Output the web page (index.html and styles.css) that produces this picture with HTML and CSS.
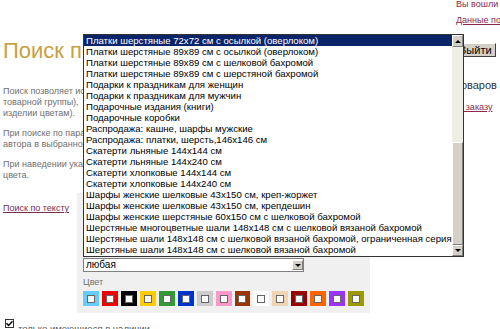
FILE: index.html
```html
<!DOCTYPE html>
<html lang="ru">
<head>
    <meta charset="UTF-8">
    <title>Поиск по каталогу</title>
    <link rel="stylesheet" href="styles.css">
</head>
<body>
    <div class="page">
        <!-- левая колонка -->
        <div class="main">
            <h1 class="title">Поиск по каталогу</h1>
            <div class="intro">
                <p class="note">Поиск позволяет искать изделия по названию (внутри<br>товарной группы),<br>изделии цветам).</p>
                <p class="note">При поиске по параметрам учитывается название и имя<br>автора в выбранной товарной группе.</p>
                <p class="note">При наведении указателя на квадрат показывается название<br>цвета.</p>
            </div>
            <div class="search">
                <div class="search-side">
                    <a href="#" class="text-link">Поиск по тексту</a>
                </div>
                <div class="panel">
                    <div class="panel-caption">Параметры поиска</div>
                    <div class="field">
                        <div class="field-label">Название</div>
                        <div class="select"><span class="select-value"></span></div>
                    </div>
                    <div class="field-label">Товарная группа</div>
                    <div class="select select-group">
                        <span class="select-value">любая</span>
                        <span class="arrow-btn"><span class="tri-down"></span></span>
                    </div>
                    <div class="field-label color-label">Цвет</div>
                    <div class="swatches">
                        <span class="swatch" style="background:#66ccff"><i></i></span>
                        <span class="swatch" style="background:#ee0000"><i></i></span>
                        <span class="swatch" style="background:#000000"><i></i></span>
                        <span class="swatch" style="background:#ffcc00"><i></i></span>
                        <span class="swatch" style="background:#339933"><i></i></span>
                        <span class="swatch" style="background:#0033cc"><i></i></span>
                        <span class="swatch" style="background:#cccccc"><i></i></span>
                        <span class="swatch" style="background:#ff99cc"><i></i></span>
                        <span class="swatch" style="background:#993300"><i></i></span>
                        <span class="swatch" style="background:#ffffff"><i></i></span>
                        <span class="swatch" style="background:#f0d5b5"><i></i></span>
                        <span class="swatch" style="background:#990000"><i></i></span>
                        <span class="swatch" style="background:#ff6600"><i></i></span>
                        <span class="swatch" style="background:#9933ff"><i></i></span>
                        <span class="swatch" style="background:#999900"><i></i></span>
                    </div>
                </div>
            </div>
            <label class="stock">
                <span class="check">
                    <svg width="7" height="7" viewBox="0 0 7 7"><path d="M0.5 3.2 L2.6 5.4 L6.5 1.2" fill="none" stroke="#000" stroke-width="1.5"/></svg>
                </span>
                <span class="stock-text">только имеющиеся в наличии</span>
            </label>
        </div>

        <!-- правая колонка -->
        <div class="sidebar">
            <div class="user">Вы вошли как Гость</div>
            <a href="#" class="side-link profile-link">Данные пользователя</a>
            <button class="logout">Выйти</button>
            <div class="cart">товаров в корзине нет</div>
            <a href="#" class="side-link order-link">К заказу</a>
        </div>
    </div>

    <!-- раскрытый список товарных групп -->
    <div class="dropdown">
        <ul class="options">
            <li class="selected">Платки шерстяные 72x72 см с осылкой (оверлоком)</li>
            <li>Платки шерстяные 89x89 см с осылкой (оверлоком)</li>
            <li>Платки шерстяные 89x89 см с шелковой бахромой</li>
            <li>Платки шерстяные 89x89 см с шерстяной бахромой</li>
            <li>Подарки к праздникам для женщин</li>
            <li>Подарки к праздникам для мужчин</li>
            <li>Подарочные издания (книги)</li>
            <li>Подарочные коробки</li>
            <li>Распродажа: кашне, шарфы мужские</li>
            <li>Распродажа: платки, шерсть,146x146 см</li>
            <li>Скатерти льняные 144x144 см</li>
            <li>Скатерти льняные 144x240 см</li>
            <li>Скатерти хлопковые 144x144 см</li>
            <li>Скатерти хлопковые 144x240 см</li>
            <li>Шарфы женские шелковые 43x150 см, креп-жоржет</li>
            <li>Шарфы женские шелковые 43x150 см, крепдешин</li>
            <li>Шарфы женские шерстяные 60x150 см с шелковой бахромой</li>
            <li>Шерстяные многоцветные шали 148x148 см с шелковой вязаной бахромой</li>
            <li>Шерстяные шали 148x148 см с шелковой вязаной бахромой, ограниченная серия</li>
            <li>Шерстяные шали 148x148 см с шелковой вязаной бахромой</li>
        </ul>
        <div class="scrollbar">
            <span class="scroll-btn"><span class="tri-up"></span></span>
            <span class="track"></span>
            <span class="thumb"></span>
            <span class="scroll-btn scroll-btn-down"><span class="tri-down"></span></span>
        </div>
    </div>
</body>
</html>
```

FILE: styles.css
```css
html,
body {
    margin: 0;
    overflow: hidden;
}

body {
    font-family: "Liberation Sans", Arial, sans-serif;
    font-size: 9px;
    color: #707070;
    background: #fff;
}

.page {
    display: flex;
    width: 700px;
}

.main {
    width: 453px;
    flex-shrink: 0;
    padding-left: 3px;
    box-sizing: border-box;
}

.title {
    margin: 38px 0 22px;
    font-size: 22px;
    line-height: 26px;
    font-weight: normal;
    color: #c9a040;
    white-space: nowrap;
}

.intro {
    display: flex;
    flex-direction: column;
    gap: 9px;
    margin-bottom: 12px;
}

.note {
    margin: 0;
    line-height: 11px;
    white-space: nowrap;
}

.search {
    display: flex;
}

.search-side {
    width: 74px;
    padding-top: 10px;
    line-height: 11px;
}

.text-link {
    color: #7a2e4e;
}

.panel {
    width: 293px;
    padding: 4px 6px 7px;
    box-sizing: border-box;
    background: #f0f0f0;
}

.panel-caption {
    line-height: 11px;
    margin-bottom: 3px;
}

.field {
    margin-bottom: 6px;
}

.field-label {
    line-height: 11px;
    margin-bottom: 2px;
}

.color-label {
    margin-top: 5px;
    margin-bottom: 3px;
}

.select {
    position: relative;
    width: 221px;
    height: 15px;
    box-sizing: border-box;
    border: 1px solid #808080;
    background: #fff;
    font-size: 10px;
    line-height: 13px;
    color: #000;
    padding-left: 2px;
}

.select-group {
    height: 14px;
    line-height: 12px;
}

.arrow-btn {
    position: absolute;
    right: 0;
    top: 1px;
    width: 11px;
    height: 10px;
    box-sizing: border-box;
    background: #d4d0c8;
    border: 1px solid;
    border-color: #fff #808080 #808080 #fff;
    display: flex;
    align-items: center;
    justify-content: center;
}

.tri-down,
.tri-up {
    width: 0;
    height: 0;
    border-left: 3px solid transparent;
    border-right: 3px solid transparent;
}

.tri-down {
    border-top: 3px solid #000;
}

.tri-up {
    border-bottom: 3px solid #000;
}

.swatches {
    display: flex;
    gap: 3px;
}

.swatch {
    width: 16px;
    height: 15px;
    display: flex;
    align-items: center;
    justify-content: center;
}

.swatch i {
    width: 8px;
    height: 8px;
    box-sizing: border-box;
    background: #fff;
    border: 1px solid #666;
}

.stock {
    display: flex;
    align-items: flex-start;
    gap: 4px;
    margin: 6px 0 0 2px;
    color: #555;
}

.stock-text {
    font-size: 9.5px;
    line-height: 11px;
    padding-top: 4px;
}

.check {
    width: 9px;
    height: 9px;
    box-sizing: border-box;
    border: 1px solid #333;
    background: #fff;
    display: flex;
    align-items: center;
    justify-content: center;
}

.sidebar {
    width: 200px;
    flex-shrink: 0;
    padding-left: 3px;
    color: #333;
    white-space: nowrap;
}

.user {
    line-height: 9px;
    color: #8a2a4a;
}

.side-link {
    display: block;
    line-height: 11px;
    color: #8a2a4a;
}

.profile-link {
    margin-top: 6px;
}

.logout {
    display: block;
    margin: 17px 0 0 -1px;
    height: 14px;
    padding: 0 3px;
    font-family: "Liberation Sans", Arial, sans-serif;
    font-size: 11px;
    line-height: 12px;
    color: #000;
    background: #d4d0c8;
    border: 1px solid;
    border-color: #fff #404040 #404040 #fff;
}

.cart {
    margin-top: 23px;
    padding-left: 0;
    font-size: 11px;
    line-height: 11px;
}

.order-link {
    margin-top: 11px;
    padding-left: 2px;
}

/* открытый список поверх формы */
.dropdown {
    position: absolute;
    left: 83px;
    top: 34px;
    width: 381px;
    height: 223px;
    box-sizing: border-box;
    border: 1px solid #333;
    background: #fff;
    display: flex;
}

.options {
    flex-grow: 1;
    margin: 0;
    padding: 0;
    list-style: none;
    font-size: 9.6px;
    color: #000;
    overflow: hidden;
}

.options li {
    height: 11px;
    line-height: 11px;
    padding-left: 2px;
    white-space: nowrap;
}

.options li.selected {
    background: #0a246a;
    color: #fff;
}

.scrollbar {
    width: 11px;
    display: flex;
    flex-direction: column;
}

.scroll-btn,
.thumb {
    box-sizing: border-box;
    background: #d4d0c8;
    border: 1px solid;
    border-color: #fff #808080 #808080 #fff;
}

.scroll-btn {
    height: 12px;
    display: flex;
    align-items: center;
    justify-content: center;
}

.scroll-btn-down {
    height: 11px;
}

.track {
    flex-grow: 1;
    background: #eeede6;
}

.thumb {
    height: 103px;
}
```
